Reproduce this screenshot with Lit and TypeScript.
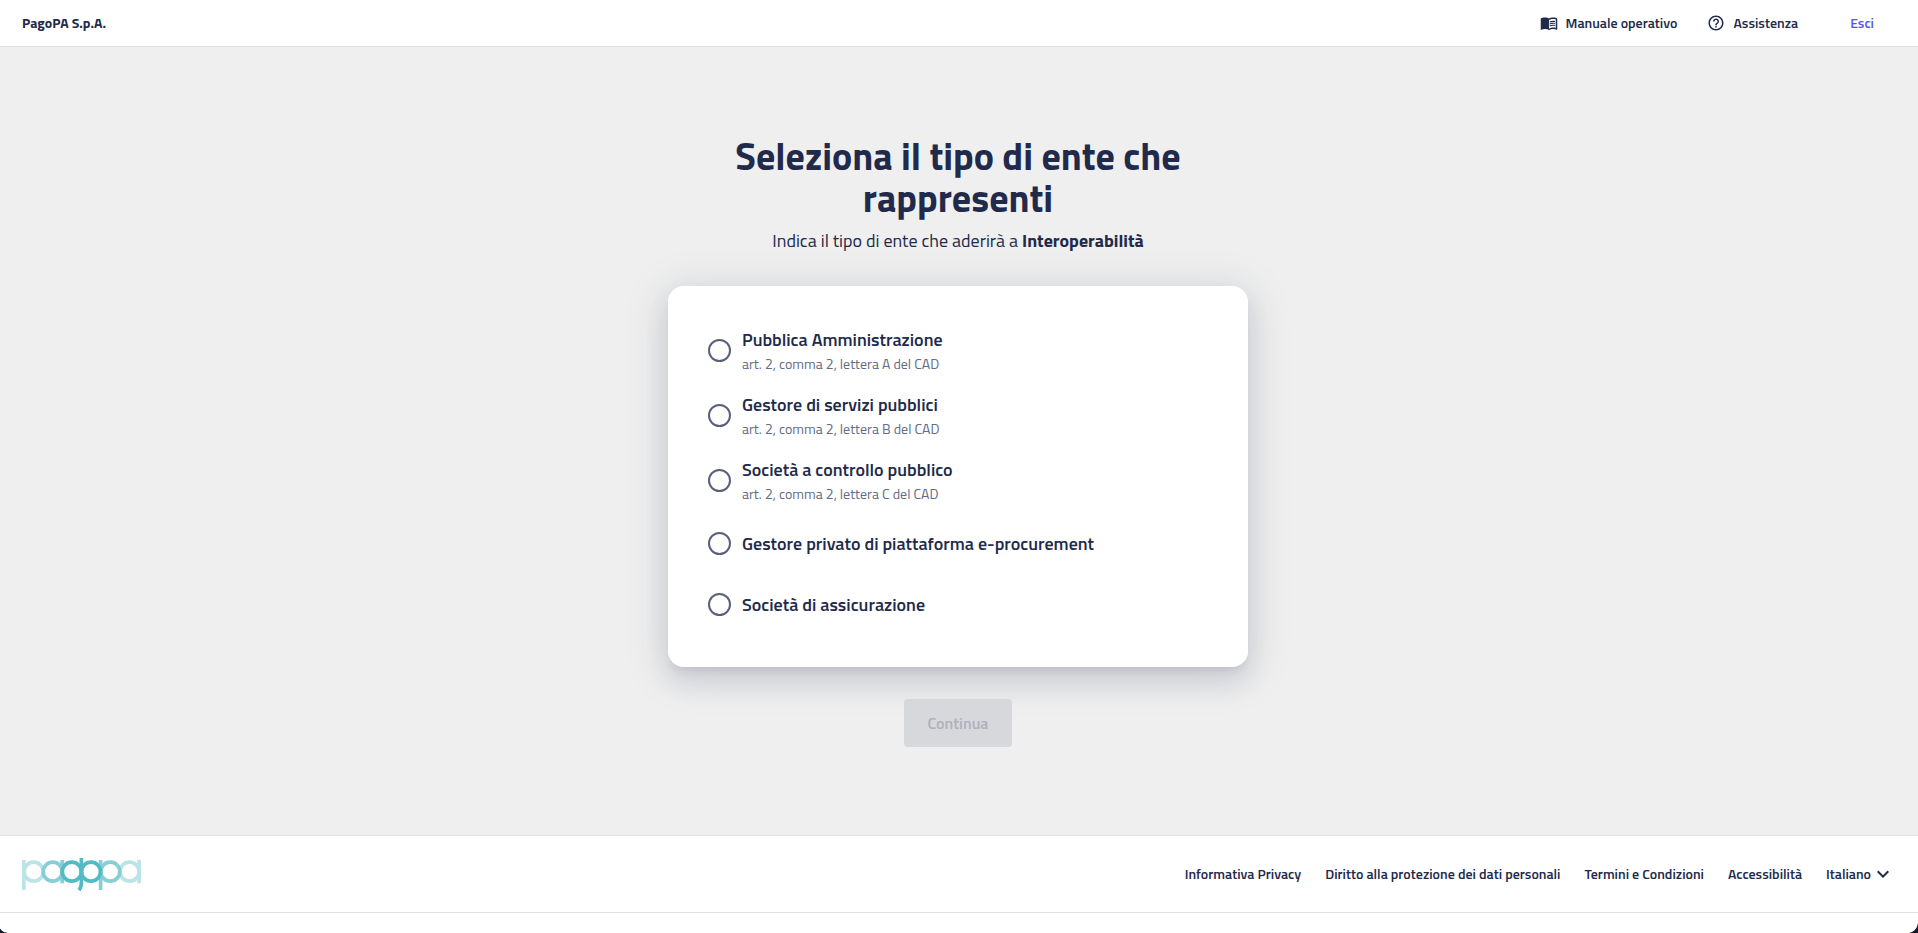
import { LitElement, css, html, nothing, svg } from "lit";
import { customElement, state } from "lit/decorators.js";

interface Institution {
  id: string;
  title: string;
  note?: string;
}

const INSTITUTIONS: Institution[] = [
  { id: "pa", title: "Pubblica Amministrazione", note: "art. 2, comma 2, lettera A del CAD" },
  { id: "gsp", title: "Gestore di servizi pubblici", note: "art. 2, comma 2, lettera B del CAD" },
  { id: "scp", title: "Società a controllo pubblico", note: "art. 2, comma 2, lettera C del CAD" },
  { id: "gpe", title: "Gestore privato di piattaforma e-procurement" },
  { id: "as", title: "Società di assicurazione" },
];

const FOOTER_LINKS = [
  "Informativa Privacy",
  "Diritto alla protezione dei dati personali",
  "Termini e Condizioni",
  "Accessibilità",
];

const bookIcon = svg`
  <path d="M21 5c-1.11-.35-2.33-.5-3.5-.5-1.95 0-4.05.4-5.5 1.5-1.45-1.1-3.55-1.5-5.5-1.5S2.45 4.9 1 6v14.65c0 .25.25.5.5.5.1 0 .15-.05.25-.05C3.1 20.45 5.05 20 6.5 20c1.95 0 4.05.4 5.5 1.5 1.35-.85 3.8-1.5 5.5-1.5 1.65 0 3.35.3 4.75 1.05.1.05.15.05.25.05.25 0 .5-.25.5-.5V6c-.6-.45-1.25-.75-2-1zm0 13.5c-1.1-.35-2.3-.5-3.5-.5-1.7 0-4.15.65-5.5 1.5V8c1.35-.85 3.8-1.5 5.5-1.5 1.2 0 2.4.15 3.5.5v11.5z"/>
  <path d="M17.5 10.5c.88 0 1.73.09 2.5.26V9.24c-.79-.15-1.64-.24-2.5-.24-1.7 0-3.24.29-4.5.83v1.66c1.13-.64 2.7-.99 4.5-.99zM13 12.49v1.66c1.13-.64 2.7-.99 4.5-.99.88 0 1.73.09 2.5.26V11.9c-.79-.15-1.64-.24-2.5-.24-1.7 0-3.24.3-4.5.83zm4.5 1.84c-1.7 0-3.24.29-4.5.83v1.66c1.13-.64 2.7-.99 4.5-.99.88 0 1.73.09 2.5.26v-1.52c-.79-.16-1.64-.24-2.5-.24z"/>`;

const helpIcon = svg`
  <path d="M11 18h2v-2h-2v2zm1-16C6.48 2 2 6.48 2 12s4.48 10 10 10 10-4.48 10-10S17.52 2 12 2zm0 18c-4.41 0-8-3.59-8-8s3.59-8 8-8 8 3.59 8 8-3.59 8-8 8zm0-14c-2.21 0-4 1.79-4 4h2c0-1.1.9-2 2-2s2 .9 2 2c0 2-3 1.75-3 5h2c0-2.25 3-2.5 3-5 0-2.21-1.79-4-4-4z"/>`;

@customElement("site-header")
export class SiteHeader extends LitElement {
  static styles = css`
    :host {
      display: block;
      background: #fff;
      border-bottom: 1px solid #dfe0e8;
    }
    .bar {
      display: flex;
      align-items: center;
      justify-content: space-between;
      height: 46px;
      padding: 0 44px 0 22px;
      font-size: 14px;
      line-height: 24px;
    }
    a {
      color: inherit;
      text-decoration: none;
    }
    .company {
      font-weight: 700;
    }
    .tools {
      display: flex;
      align-items: center;
      gap: 30px;
      font-weight: 600;
    }
    .tool {
      display: flex;
      align-items: center;
      gap: 8px;
    }
    .tool svg {
      width: 18px;
      height: 18px;
      fill: currentColor;
    }
    .exit {
      margin-left: 22px;
      padding: 0;
      border: 0;
      background: none;
      color: #5555ee;
      font: inherit;
      cursor: pointer;
    }
  `;

  render() {
    return html`
      <header class="bar">
        <a class="company" href="#">PagoPA S.p.A.</a>
        <nav class="tools">
          <a class="tool" href="#"><svg viewBox="0 0 24 24" aria-hidden="true">${bookIcon}</svg>Manuale operativo</a>
          <a class="tool" href="#"><svg viewBox="0 0 24 24" aria-hidden="true">${helpIcon}</svg>Assistenza</a>
          <button class="exit" type="button">Esci</button>
        </nav>
      </header>
    `;
  }
}

@customElement("institution-form")
export class InstitutionForm extends LitElement {
  static styles = css`
    :host {
      display: block;
      width: 100%;
      max-width: 580px;
    }
    .form {
      display: flex;
      flex-direction: column;
      align-items: center;
      gap: 32px;
    }
    .intro {
      text-align: center;
    }
    h1 {
      margin: 0 0 8px;
      font-size: 38px;
      line-height: 42px;
      font-weight: 700;
    }
    p {
      margin: 0;
      font-size: 18px;
      line-height: 27px;
    }
    fieldset {
      display: flex;
      flex-direction: column;
      gap: 16px;
      box-sizing: border-box;
      width: 100%;
      margin: 0;
      padding: 40px;
      border: 0;
      border-radius: 16px;
      background: #fff;
      box-shadow:
        0 8px 10px -5px rgba(33, 43, 77, 0.1),
        0 16px 24px 2px rgba(33, 43, 77, 0.07),
        0 6px 40px 5px rgba(33, 43, 77, 0.13);
    }
    .option {
      display: flex;
      align-items: center;
      gap: 11px;
      min-height: 45px;
      cursor: pointer;
    }
    input {
      appearance: none;
      flex: none;
      box-sizing: border-box;
      width: 23px;
      height: 23px;
      margin: 0;
      border: 2px solid #5a607b;
      border-radius: 50%;
      background: #fff;
      cursor: pointer;
    }
    input:checked {
      border-color: #5555ee;
      background: radial-gradient(circle, #5555ee 5px, #fff 6px);
    }
    .text {
      display: flex;
      flex-direction: column;
    }
    .title {
      font-size: 18px;
      line-height: 27px;
      font-weight: 600;
    }
    .note {
      color: #646b84;
      font-size: 14px;
      line-height: 22px;
    }
    .submit {
      height: 48px;
      padding: 0 24px;
      border: 0;
      border-radius: 4px;
      background: #5555ee;
      color: #fff;
      font: inherit;
      font-weight: 600;
    }
    .submit:disabled {
      background: #d7d8dc;
      color: #afb1bc;
    }
  `;

  @state() private selected = "";

  render() {
    return html`
      <form class="form" @submit=${(e: Event) => e.preventDefault()}>
        <div class="intro">
          <h1>Seleziona il tipo di ente che rappresenti</h1>
          <p>Indica il tipo di ente che aderirà a <strong>Interoperabilità</strong></p>
        </div>
        <fieldset>
          ${INSTITUTIONS.map(
            (item) => html`
              <label class="option" for=${item.id}>
                <input
                  type="radio"
                  name="institution"
                  id=${item.id}
                  .checked=${this.selected === item.id}
                  @change=${() => (this.selected = item.id)}
                />
                <span class="text">
                  <span class="title">${item.title}</span>
                  ${item.note ? html`<span class="note">${item.note}</span>` : nothing}
                </span>
              </label>
            `,
          )}
        </fieldset>
        <button class="submit" type="submit" ?disabled=${!this.selected}>Continua</button>
      </form>
    `;
  }
}

@customElement("site-footer")
export class SiteFooter extends LitElement {
  static styles = css`
    :host {
      display: block;
      background: #fff;
      border-top: 1px solid #e0e0e2;
    }
    .bar {
      display: flex;
      align-items: center;
      justify-content: space-between;
      min-height: 76px;
      padding: 0 23px 0 22px;
      border-bottom: 1px solid #e0e0e2;
    }
    .end {
      height: 20px;
    }
    .logo {
      display: block;
      width: 119px;
      height: 33px;
      fill: none;
      stroke-width: 3.7;
    }
    .light {
      stroke: #bae4e5;
    }
    .mid {
      stroke: #87cfd5;
    }
    .dark {
      stroke: #53bac6;
    }
    .links {
      display: flex;
      align-items: center;
      gap: 24px;
      font-size: 14px;
      line-height: 24px;
      font-weight: 600;
    }
    .links a {
      color: inherit;
      text-decoration: none;
    }
    .language {
      display: grid;
      align-items: center;
    }
    .language select,
    .language svg {
      grid-area: 1 / 1;
    }
    select {
      appearance: none;
      field-sizing: content;
      margin: 0;
      padding: 0 24px 0 0;
      border: 0;
      background: none;
      color: inherit;
      font: inherit;
      cursor: pointer;
    }
    .language svg {
      justify-self: end;
      width: 24px;
      height: 24px;
      fill: currentColor;
      pointer-events: none;
    }
  `;

  render() {
    return html`
      <footer>
        <div class="bar">
          <a href="#" aria-label="PagoPA">
            <svg class="logo" viewBox="0 0 119 33" aria-hidden="true">
              <g class="light">
                <path d="M1.8 2v30M117.1 2v23.3" />
                <circle cx="11.7" cy="13.7" r="9.5" />
                <circle cx="107.5" cy="13.7" r="9.5" />
              </g>
              <g class="mid">
                <path d="M40.2 2v23.3M78.6 2v30" />
                <circle cx="30.7" cy="13.7" r="9.5" />
                <circle cx="88.3" cy="13.7" r="9.5" />
              </g>
              <g class="dark">
                <circle cx="49.8" cy="13.7" r="9.5" />
                <circle cx="69" cy="13.7" r="9.5" />
                <path d="M59.4 0v25c0 3-.6 5-2.4 7.2" />
              </g>
            </svg>
          </a>
          <nav class="links">
            ${FOOTER_LINKS.map((text) => html`<a href="#">${text}</a>`)}
            <label class="language">
              <select aria-label="Lingua">
                <option selected>Italiano</option>
                <option>English</option>
              </select>
              <svg viewBox="0 0 24 24" aria-hidden="true">
                <path d="M7.41 8.59 12 13.17l4.59-4.58L18 10l-6 6-6-6 1.41-1.41z" />
              </svg>
            </label>
          </nav>
        </div>
        <div class="end"></div>
      </footer>
    `;
  }
}

@customElement("app-root")
export class AppRoot extends LitElement {
  static styles = css`
    :host {
      position: relative;
      display: flex;
      flex-direction: column;
      min-height: 100vh;
      background: #efefef;
      color: #212a4a;
      font-family: "Titillium Web", "Lato", sans-serif;
      font-size: 16px;
    }
    main {
      display: flex;
      flex: 1;
      align-items: center;
      justify-content: center;
      padding: 24px 26px 24px 24px;
    }
    .corner {
      position: absolute;
      bottom: 0;
      width: 11px;
      height: 11px;
      fill: #14152a;
      pointer-events: none;
    }
    .left {
      left: 0;
    }
    .right {
      right: 0;
    }
  `;

  render() {
    return html`
      <site-header></site-header>
      <main><institution-form></institution-form></main>
      <site-footer></site-footer>
      <svg class="corner left" viewBox="0 0 11 11" aria-hidden="true"><path d="M0 6.5Q2.5 10.5 8 11H0z" /></svg>
      <svg class="corner right" viewBox="0 0 11 11" aria-hidden="true"><path d="M11 1Q10 9 2 11h9z" /></svg>
    `;
  }
}
